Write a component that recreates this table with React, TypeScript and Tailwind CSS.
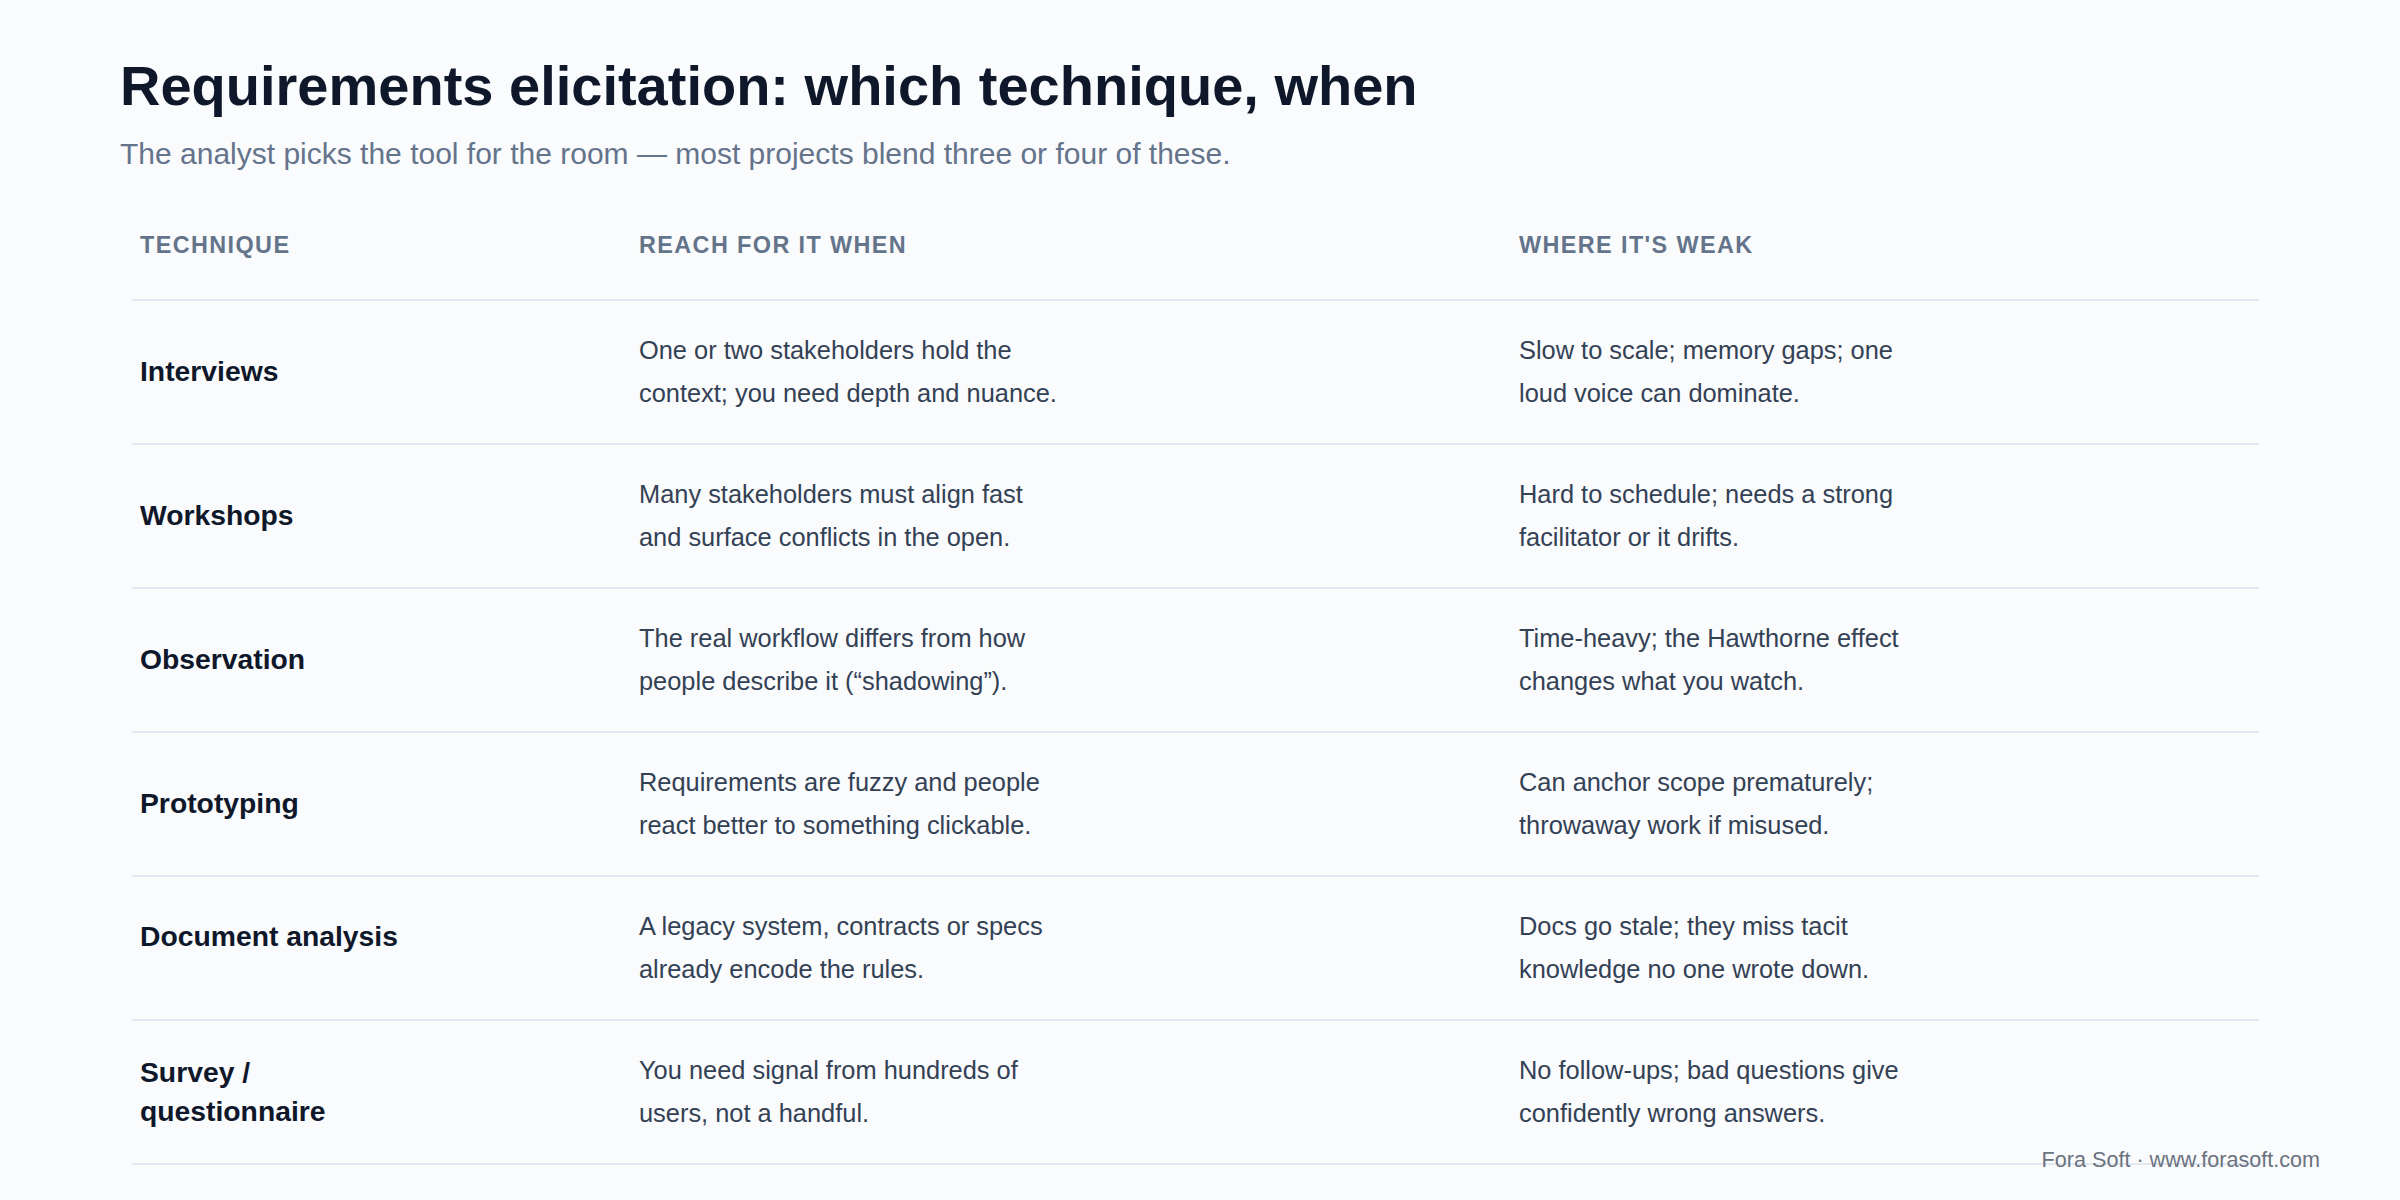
const rows = [
  {
    technique: 'Interviews',
    when: 'One or two stakeholders hold the context; you need depth and nuance.',
    weak: 'Slow to scale; memory gaps; one loud voice can dominate.',
    lift: '',
  },
  {
    technique: 'Workshops',
    when: 'Many stakeholders must align fast and surface conflicts in the open.',
    weak: 'Hard to schedule; needs a strong facilitator or it drifts.',
    lift: '',
  },
  {
    technique: 'Observation',
    when: 'The real workflow differs from how people describe it (\u201cshadowing\u201d).',
    weak: 'Time-heavy; the Hawthorne effect changes what you watch.',
    lift: '',
  },
  {
    technique: 'Prototyping',
    when: 'Requirements are fuzzy and people react better to something clickable.',
    weak: 'Can anchor scope prematurely; throwaway work if misused.',
    lift: '',
  },
  {
    technique: 'Document analysis',
    when: 'A legacy system, contracts or specs already encode the rules.',
    weak: 'Docs go stale; they miss tacit knowledge no one wrote down.',
    lift: 'mb-[22px]',
  },
  {
    technique: 'Survey / questionnaire',
    when: 'You need signal from hundreds of users, not a handful.',
    weak: 'No follow-ups; bad questions give confidently wrong answers.',
    lift: '',
  },
];

export default function App() {
  return (
    <div className="relative min-h-screen w-full bg-[#fafbfd] font-['Liberation_Sans',Arial,sans-serif]">
      <div className="px-[120px] pt-[52px]">
        <h1 className="text-[56px] font-bold leading-[1.2] text-[#0f172a]">
          Requirements elicitation: which technique, when
        </h1>
        <p className="mt-[12px] text-[30px] leading-[1.5] text-[#64748b]">
          The analyst picks the tool for the room — most projects blend three or four of these.
        </p>

        <table className="ml-[12px] mt-[15px] w-[2127px] table-fixed border-collapse">
          <colgroup>
            <col className="w-[499px]" />
            <col className="w-[880px]" />
            <col />
          </colgroup>
          <thead>
            <tr className="border-b-2 border-[#e2e8f0]">
              {['Technique', 'Reach for it when', "Where it's weak"].map((h) => (
                <th
                  key={h}
                  className="px-2 pt-[40px] pb-[40px] text-left align-middle text-[23.4px] font-bold uppercase leading-[1.2] tracking-[0.06em] text-[#64748b]"
                >
                  {h}
                </th>
              ))}
            </tr>
          </thead>
          <tbody>
            {rows.map((r) => (
              <tr key={r.technique} className="border-b-2 border-[#e2e8f0]">
                <td className="px-2 py-[28px] align-middle">
                  <div className={`max-w-[270px] text-[28.3px] font-bold leading-[1.4] text-[#0f172a] ${r.lift}`}>
                    {r.technique}
                  </div>
                </td>
                <td className="px-2 py-[28px] align-middle">
                  <div className="max-w-[30ch] text-[25.4px] leading-[43px] text-[#334155]">{r.when}</div>
                </td>
                <td className="px-2 py-[28px] align-middle">
                  <div className="max-w-[30ch] text-[25.4px] leading-[43px] text-[#334155]">{r.weak}</div>
                </td>
              </tr>
            ))}
          </tbody>
        </table>
      </div>

      <div className="absolute bottom-[27px] right-[80px] text-[21.6px] leading-[1.15] text-[#6b7280]">
        Fora Soft · www.forasoft.com
      </div>
    </div>
  );
}
